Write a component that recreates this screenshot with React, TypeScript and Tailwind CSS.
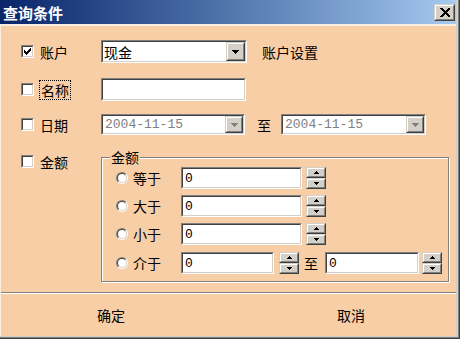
import React from "react";

const cjk = "font-['Noto_Sans_CJK_SC','Noto_Sans',sans-serif]";
const mono = "font-['Liberation_Mono',monospace]";

function Sunken({ className = "", children }: { className?: string; children?: React.ReactNode }) {
  return (
    <div className={`border border-t-[#808080] border-l-[#808080] border-b-white border-r-white shrink-0 ${className}`}>
      <div className="w-full h-full border border-t-[#404040] border-l-[#404040] border-b-[#d4d0c8] border-r-[#d4d0c8] bg-white flex items-center overflow-hidden">
        {children}
      </div>
    </div>
  );
}

function Raised({ className = "", children }: { className?: string; children?: React.ReactNode }) {
  return (
    <div className={`border border-t-[#d4d0c8] border-l-[#d4d0c8] border-b-[#404040] border-r-[#404040] shrink-0 ${className}`}>
      <div className="w-full h-full border border-t-white border-l-white border-b-[#808080] border-r-[#808080] bg-[#d4d0c8] flex items-center justify-center">
        {children}
      </div>
    </div>
  );
}

function Check({ checked }: { checked?: boolean }) {
  return (
    <Sunken className="w-[13px] h-[13px]">
      <div className="w-full h-full flex items-center justify-center">
        {checked && (
          <svg width="7" height="7" viewBox="0 0 7 7" shapeRendering="crispEdges">
            <path d="M6 0h1v3h-1v1h-1v1h-1v1h-1v1h-1v-1h-1v-1h-1v-3h1v1h1v1h1v-1h1v-1h1v-1h1z" fill="black" />
          </svg>
        )}
      </div>
    </Sunken>
  );
}

function Radio() {
  return (
    <div className="w-[12px] h-[12px] rounded-full border border-t-[#808080] border-l-[#808080] border-b-white border-r-white shrink-0">
      <div className="w-full h-full rounded-full border border-t-[#404040] border-l-[#404040] border-b-[#d4d0c8] border-r-[#d4d0c8] bg-white" />
    </div>
  );
}

function Tri({ up, color = "black", w = 7, h = 4 }: { up?: boolean; color?: string; w?: number; h?: number }) {
  return (
    <svg width={w} height={h} viewBox={`0 0 ${w} ${h}`} shapeRendering="crispEdges">
      <path d={up ? `M${w / 2} 0L${w} ${h}H0z` : `M0 0H${w}L${w / 2} ${h}z`} fill={color} />
    </svg>
  );
}

function Spin() {
  return (
    <div className="flex flex-col w-[20px] h-[22px] shrink-0">
      <Raised className="w-[20px] h-[11px]">
        <Tri up w={5} h={3} />
      </Raised>
      <Raised className="w-[20px] h-[11px]">
        <Tri w={5} h={3} />
      </Raised>
    </div>
  );
}

function Field({ w, value = "0" }: { w: string; value?: string }) {
  return (
    <Sunken className={`${w} h-[22px]`}>
      <span className={`${mono} text-[13px] pl-[2px] text-black leading-none`}>{value}</span>
    </Sunken>
  );
}

function DateCombo({ w }: { w: string }) {
  return (
    <Sunken className={`${w} h-[21px]`}>
      <span className={`${mono} text-[13px] pl-[2px] text-[#808080] leading-none flex-1`}>2004-11-15</span>
      <Raised className="w-[18px] h-full">
        <Tri color="#808080" />
      </Raised>
    </Sunken>
  );
}

function AmountRow({ label, children }: { label: string; children: React.ReactNode }) {
  return (
    <div className="flex items-center h-[22px]">
      <Radio />
      <span className="ml-[5px] w-[48px] text-[14px] leading-none">{label}</span>
      {children}
    </div>
  );
}

export default function App() {
  return (
    <div className={`w-[460px] h-[339px] flex flex-col bg-[#404040] pr-[1px] pb-[1px] ${cjk} text-black`}>
      <div className="flex-1 flex flex-col border-r border-b border-r-[#808080] border-b-[#808080] bg-[#d4d0c8] pr-[2px] pb-[1px]">
        <div className="h-[24px] flex items-center bg-gradient-to-r from-[#0a246a] to-[#a6caf0] pl-[3px] pr-[1px]">
          <span className="text-white font-bold text-[15px] leading-none flex-1">查询条件</span>
          <Raised className="w-[21px] h-[17px]">
            <svg width="10" height="9" viewBox="0 0 10 9" shapeRendering="crispEdges">
              <path d="M0 0h2l3 3 3-3h2v1l-3.5 3.5L10 8v1H8L5 6 2 9H0V8l3.5-3.5L0 1z" fill="black" />
            </svg>
          </Raised>
        </div>
        <div className="flex-1 flex flex-col bg-[#f8cea7] border-t-2 border-t-[#fbeee0] border-l border-l-[#fbeee0]">
          {/* Row 1 */}
          <div className="flex items-center h-[23px] mt-[14px] pl-[20px]">
            <Check checked />
            <span className="ml-[6px] w-[61px] text-[14px] leading-none">账户</span>
            <Sunken className="w-[146px] h-[23px]">
              <span className="text-[14px] pl-[1px] leading-none flex-1">现金</span>
              <Raised className="w-[19px] h-full">
                <Tri />
              </Raised>
            </Sunken>
            <span className="ml-[15px] text-[14px] leading-none">账户设置</span>
          </div>
          {/* Row 2 */}
          <div className="flex items-center h-[23px] mt-[15px] pl-[20px]">
            <Check />
            <span className="ml-[6px] w-[61px] flex">
              <span className="text-[14px] leading-none outline outline-1 outline-dotted outline-black px-[1px] py-[2px]">名称</span>
            </span>
            <Sunken className="w-[145px] h-[23px]" />
          </div>
          {/* Row 3 */}
          <div className="flex items-center h-[21px] mt-[13px] pl-[20px]">
            <Check />
            <span className="ml-[6px] w-[61px] text-[14px] leading-none">日期</span>
            <DateCombo w="w-[144px]" />
            <span className="ml-[12px] w-[24px] text-[14px] leading-none">至</span>
            <DateCombo w="w-[145px]" />
          </div>
          {/* Row 4 */}
          <div className="flex items-start mt-[20px] pl-[20px]">
            <Check />
            <span className="ml-[6px] w-[61px] text-[14px] leading-none">金额</span>
            <div className="relative mt-[2px] w-[348px] border border-[#808080] shadow-[1px_1px_0_#ffffff,inset_1px_1px_0_#ffffff]">
              <span className="absolute left-[8px] -top-[8px] bg-[#f8cea7] px-[1px] text-[14px] leading-none">金额</span>
              <div className="flex flex-col gap-[6px] pt-[9px] pb-[7px] pl-[14px]">
                <AmountRow label="等于">
                  <Field w="w-[121px]" />
                  <div className="ml-[4px]"><Spin /></div>
                </AmountRow>
                <AmountRow label="大于">
                  <Field w="w-[121px]" />
                  <div className="ml-[4px]"><Spin /></div>
                </AmountRow>
                <AmountRow label="小于">
                  <Field w="w-[121px]" />
                  <div className="ml-[4px]"><Spin /></div>
                </AmountRow>
                <div className="mt-[1px]">
                  <AmountRow label="介于">
                    <Field w="w-[93px]" />
                    <div className="ml-[5px]"><Spin /></div>
                    <span className="ml-[5px] w-[21px] text-[14px] leading-none">至</span>
                    <Field w="w-[94px]" />
                    <div className="ml-[3px]"><Spin /></div>
                  </AmountRow>
                </div>
              </div>
            </div>
          </div>
          {/* separator */}
          <div className="mt-[10px] h-[1px] bg-[#808080]" />
          <div className="h-[1px] bg-white" />
          <div className="flex-1 flex items-center text-[14px] leading-none">
            <span className="ml-[96px] w-[30px]">确定</span>
            <span className="ml-[210px] w-[30px]">取消</span>
          </div>
        </div>
      </div>
    </div>
  );
}
